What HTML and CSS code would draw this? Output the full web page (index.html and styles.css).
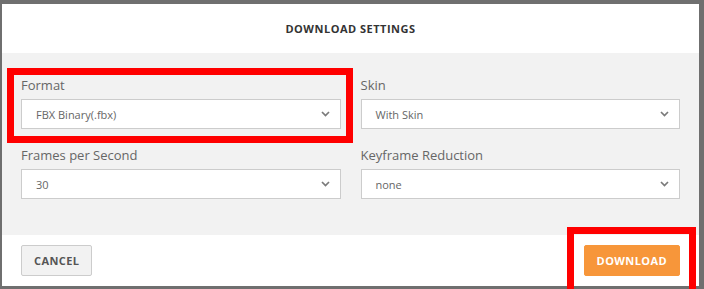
FILE: index.html
```html
<!DOCTYPE html>
<html lang="en">
<head>
<meta charset="UTF-8">
<meta name="viewport" content="width=device-width, initial-scale=1.0">
<title>Download Settings</title>
<link rel="stylesheet" href="styles.css">
</head>
<body>

<div class="dialog">
    <div class="dialog-header">DOWNLOAD SETTINGS</div>

    <div class="dialog-body">
        <div class="field">
            <div class="field-label">Format</div>
            <div class="select">
                <span>FBX Binary(.fbx)</span>
                <svg class="chevron" width="9" height="6" viewBox="0 0 9 6"><path d="M1 1 L4.5 4.5 L8 1" fill="none" stroke="#7a7a7a" stroke-width="1.7"/></svg>
            </div>
        </div>
        <div class="field">
            <div class="field-label">Skin</div>
            <div class="select">
                <span>With Skin</span>
                <svg class="chevron" width="9" height="6" viewBox="0 0 9 6"><path d="M1 1 L4.5 4.5 L8 1" fill="none" stroke="#7a7a7a" stroke-width="1.7"/></svg>
            </div>
        </div>
        <div class="field">
            <div class="field-label">Frames per Second</div>
            <div class="select">
                <span>30</span>
                <svg class="chevron" width="9" height="6" viewBox="0 0 9 6"><path d="M1 1 L4.5 4.5 L8 1" fill="none" stroke="#7a7a7a" stroke-width="1.7"/></svg>
            </div>
        </div>
        <div class="field">
            <div class="field-label">Keyframe Reduction</div>
            <div class="select">
                <span>none</span>
                <svg class="chevron" width="9" height="6" viewBox="0 0 9 6"><path d="M1 1 L4.5 4.5 L8 1" fill="none" stroke="#7a7a7a" stroke-width="1.7"/></svg>
            </div>
        </div>
    </div>

    <div class="dialog-footer">
        <button class="btn btn-cancel">CANCEL</button>
        <button class="btn btn-download">DOWNLOAD</button>
    </div>
</div>

<!-- annotation boxes -->
<div class="mark mark-format"></div>
<div class="mark mark-download"></div>

</body>
</html>
```

FILE: styles.css
```css
body {
    margin: 0;
    padding: 4px 5px 3px 2px;
    background: #6f6f6f;
    font-family: "Open Sans", "Noto Sans", sans-serif;
    position: relative;
    height: 289px;
    box-sizing: border-box;
    overflow: hidden;
}

.dialog {
    background: #fff;
    height: 282px;
    display: flex;
    flex-direction: column;
}

.dialog-header {
    height: 49px;
    display: flex;
    align-items: center;
    justify-content: center;
    font-size: 11px;
    font-weight: bold;
    letter-spacing: 0.5px;
    color: #333;
}

.dialog-body {
    background: #f2f2f2;
    height: 182px;
    box-sizing: border-box;
    padding: 23px 19px 0 19px;
    display: grid;
    grid-template-columns: 1fr 1fr;
    column-gap: 20px;
    row-gap: 17px;
    align-content: start;
}

.field-label {
    font-size: 13px;
    line-height: 18px;
    color: #666;
    margin-bottom: 5px;
}

.select {
    height: 30px;
    box-sizing: border-box;
    border: 1px solid #ccc;
    background: #fff;
    display: flex;
    align-items: center;
    justify-content: space-between;
    padding: 0 10px 0 14px;
    font-size: 11px;
    color: #666;
}

.chevron {
    display: block;
}

.dialog-footer {
    flex: 1;
    display: flex;
    justify-content: space-between;
    align-items: flex-start;
    padding: 10px 19px 0 19px;
}

.btn {
    height: 31px;
    font-family: "Open Sans", "Noto Sans", sans-serif;
    font-size: 11px;
    font-weight: bold;
    letter-spacing: 0.4px;
    border-radius: 2px;
    padding: 0 12px;
    cursor: pointer;
}

.btn-cancel {
    background: #f2f2f2;
    border: 1px solid #ccc;
    color: #555;
}

.btn-download {
    background: #f7963a;
    border: 1px solid #f7963a;
    color: #fff;
}

.mark {
    position: absolute;
    border: 7px solid #ff0000;
    box-sizing: border-box;
}

.mark-format {
    left: 7px;
    top: 68px;
    width: 346px;
    height: 75px;
}

.mark-download {
    left: 567px;
    top: 227px;
    width: 129px;
    height: 62px;
    border-bottom-width: 0;
}
```
